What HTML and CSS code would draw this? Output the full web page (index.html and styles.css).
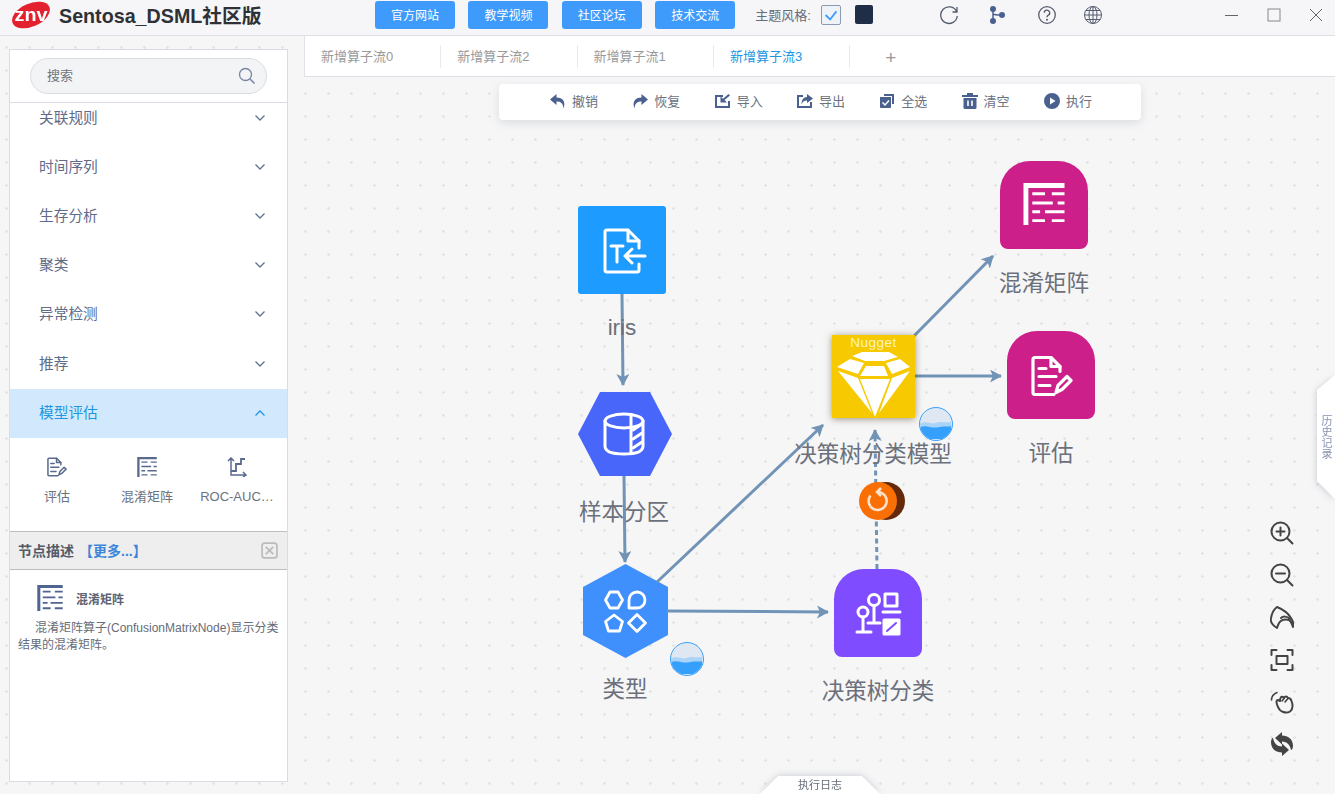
FILE: index.html
```html
<!DOCTYPE html>
<html lang="zh">
<head>
<meta charset="utf-8">
<title>Sentosa_DSML社区版</title>
<link rel="stylesheet" href="styles.css">
</head>
<body>
<svg class="defs" aria-hidden="true">
  <symbol id="i-matrix" viewBox="0 0 42 43">
    <path fill="none" stroke="currentColor" stroke-width="5" d="M0 2.500H42M2.500 0V43"/>
    <path fill="none" stroke="currentColor" stroke-width="3" d="M9 11H22M29 11H42M9 20.500H30M35 20.500H42M9 29.500H17M22 29.500H42M9 38.500H22M29 38.500H42"/>
  </symbol>
  <symbol id="i-report" viewBox="0 0 42 41">
    <g fill="none" stroke="currentColor" stroke-width="3.200" stroke-linecap="round" stroke-linejoin="round">
      <path d="M29 16V11L20 2H4Q2 2 2 4V37Q2 39 4 39H23"/>
      <path d="M20 2V11H29"/>
      <path d="M8 13H15M8 21H25M8 30H19"/>
      <path d="M25 37L27 30L36 21L40 25L31 34Z"/>
    </g>
  </symbol>
</svg>

<div class="app">
  <header class="topbar">
    <div class="brand">
      <span class="logo">
        <svg class="logo-mark" viewBox="0 0 38 28"><ellipse cx="19" cy="14" rx="20" ry="11.500" transform="rotate(-24 19 14)" fill="#e3202d"/></svg>
        <span class="logo-text">znv</span>
      </span>
      <span class="brand-name">Sentosa_DSML社区版</span>
    </div>
    <nav class="links">
      <a class="link-btn">官方网站</a>
      <a class="link-btn">教学视频</a>
      <a class="link-btn">社区论坛</a>
      <a class="link-btn">技术交流</a>
    </nav>
    <div class="theme">
      <span class="theme-label">主题风格:</span>
      <span class="swatch-light">
        <svg viewBox="0 0 20 20"><path fill="none" stroke="#3f9bfb" stroke-width="2" d="M4 10L9 15L16 6"/></svg>
      </span>
      <span class="swatch-dark"></span>
    </div>
    <div class="tools">
      <svg class="tool" viewBox="0 0 20 20"><path fill="none" stroke="#555d6e" stroke-width="1.300" d="M17.500 6.500A8.300 8.300 0 1 0 18.300 11M18 2V7H13.500"/></svg>
      <svg class="tool" viewBox="0 0 20 20"><g fill="#4a6190"><circle cx="6" cy="4" r="3"/><circle cx="6" cy="16" r="3"/><circle cx="15" cy="10" r="3"/></g><path fill="none" stroke="#4a6190" stroke-width="1.500" d="M6 4V16M6 9Q7 10 15 10"/></svg>
      <svg class="tool tool-help" viewBox="0 0 20 20"><circle cx="10" cy="10" r="8.300" fill="none" stroke="#555d6e" stroke-width="1.300"/><path fill="none" stroke="#555d6e" stroke-width="1.400" d="M7.300 7.800A2.700 2.700 0 1 1 11 10.300Q10 10.800 10 12.300"/><circle cx="10" cy="14.700" r="1" fill="#555d6e"/></svg>
      <svg class="tool" viewBox="0 0 20 20"><g fill="none" stroke="#555d6e" stroke-width="1"><circle cx="10" cy="10" r="8.500"/><ellipse cx="10" cy="10" rx="4" ry="8.500"/><path d="M10 1.500V18.500M1.500 10H18.500M2.700 5.500H17.300M2.700 14.500H17.300"/></g></svg>
    </div>
    <div class="winctl">
      <svg class="win" viewBox="0 0 16 16"><path stroke="#666" stroke-width="1" d="M1 8.500H14"/></svg>
      <svg class="win" viewBox="0 0 16 16"><rect x="2" y="2" width="12" height="12" fill="none" stroke="#888" stroke-width="1"/></svg>
      <svg class="win" viewBox="0 0 16 16"><path stroke="#666" stroke-width="1" d="M2 2L14 14M14 2L2 14"/></svg>
    </div>
  </header>

  <div class="workspace">
    <aside class="sidebar">
      <div class="search-wrap">
        <div class="search">
          <span class="search-text">搜索</span>
          <svg class="search-icon" viewBox="0 0 18 18"><circle cx="7.500" cy="7.500" r="6" fill="none" stroke="#7a86a8" stroke-width="1.300"/><path stroke="#7a86a8" stroke-width="1.600" d="M12 12L16.500 16.500"/></svg>
        </div>
      </div>
      <div class="menu-scroll">
        <ul class="menu">
          <li class="menu-item">关联规则<svg class="chev" viewBox="0 0 10 6"><path d="M.5.5L5 5L9.500.5"/></svg></li>
          <li class="menu-item">时间序列<svg class="chev" viewBox="0 0 10 6"><path d="M.5.5L5 5L9.500.5"/></svg></li>
          <li class="menu-item">生存分析<svg class="chev" viewBox="0 0 10 6"><path d="M.5.5L5 5L9.500.5"/></svg></li>
          <li class="menu-item">聚类<svg class="chev" viewBox="0 0 10 6"><path d="M.5.5L5 5L9.500.5"/></svg></li>
          <li class="menu-item">异常检测<svg class="chev" viewBox="0 0 10 6"><path d="M.5.5L5 5L9.500.5"/></svg></li>
          <li class="menu-item">推荐<svg class="chev" viewBox="0 0 10 6"><path d="M.5.5L5 5L9.500.5"/></svg></li>
          <li class="menu-item menu-item-open">模型评估<svg class="chev" viewBox="0 0 10 6"><path d="M.5 5.500L5 1L9.500 5.500"/></svg></li>
        </ul>
        <div class="palette">
          <div class="pal-item">
            <svg class="pal-icon"><use href="#i-report"/></svg>
            <span class="pal-label">评估</span>
          </div>
          <div class="pal-item">
            <svg class="pal-icon"><use href="#i-matrix"/></svg>
            <span class="pal-label">混淆矩阵</span>
          </div>
          <div class="pal-item">
            <svg class="pal-icon" viewBox="0 0 20 20"><g fill="none" stroke="currentColor" stroke-width="1.500"><path d="M4 1V18H19M1 4L4 1L7 4M16 15L19 18L16 20"/><path d="M4 14H9V7H14V2H18" stroke-width="1.800"/></g></svg>
            <span class="pal-label">ROC-AUC…</span>
          </div>
        </div>
      </div>
      <section class="desc">
        <div class="desc-head">
          <span class="desc-title">节点描述</span>
          <a class="desc-more">【更多...】</a>
          <svg class="desc-close" viewBox="0 0 16 16"><rect x="1" y="1" width="14" height="14" rx="2.500" fill="none" stroke="#bbb" stroke-width="1.600"/><path stroke="#bbb" stroke-width="1.600" d="M4.500 4.500L11.500 11.500M11.500 4.500L4.500 11.500"/></svg>
        </div>
        <div class="desc-body">
          <div class="desc-node">
            <svg class="desc-icon"><use href="#i-matrix"/></svg>
            <b class="desc-name">混淆矩阵</b>
          </div>
          <p class="desc-text">混淆矩阵算子(ConfusionMatrixNode)显示分类结果的混淆矩阵。</p>
        </div>
      </section>
    </aside>

    <main class="main">
      <div class="tabs">
        <div class="tab">新增算子流0</div>
        <div class="tab">新增算子流2</div>
        <div class="tab">新增算子流1</div>
        <div class="tab tab-active">新增算子流3</div>
        <div class="tab-add">+</div>
      </div>
      <div class="canvas">
        <div class="toolbar">
          <div class="tb-item"><svg class="tb-icon" viewBox="0 0 16 16"><path d="M6.500 1L0 6.500L6.500 12V8.500C10.500 8.500 13 10 13.500 15.500C16 9 13 4.500 6.500 4.500Z"/></svg>撤销</div>
          <div class="tb-item"><svg class="tb-icon" viewBox="0 0 16 16"><path d="M9.500 1L16 6.500L9.500 12V8.500C5.500 8.500 3 10 2.500 15.500C0 9 3 4.500 9.500 4.500Z"/></svg>恢复</div>
          <div class="tb-item"><svg class="tb-icon" viewBox="0 0 16 16"><path d="M0 2H8V4H2V13H13V8H15V15H0Z"/><path d="M15 2.500L9.500 7L12 9.500H5.500V3.500L8 5.800L13.500 1Z"/></svg>导入</div>
          <div class="tb-item"><svg class="tb-icon" viewBox="0 0 16 16"><path d="M0 2H6V4H2V13H13V9H15V15H0Z"/><path d="M10 1L16 5.500L10 10V7.500C7 7.500 5.500 9 4.500 11.500C4.500 7 6.500 4 10 4Z"/></svg>导出</div>
          <div class="tb-item"><svg class="tb-icon" viewBox="0 0 16 16"><path d="M5 1H15V11H13V3H5Z"/><path d="M1 4H12V14Q12 15 11 15H2Q1 15 1 14Z"/><path fill="none" stroke="#fff" stroke-width="1.500" d="M3.500 9.500L6 12L10 7.500"/></svg>全选</div>
          <div class="tb-item"><svg class="tb-icon" viewBox="0 0 16 16"><path d="M5 0H11V2H16V4H0V2H5Z"/><path d="M1.500 5H14.500V14.500Q14.500 16 13 16H3Q1.500 16 1.500 14.500Z"/><path stroke="#fff" stroke-width="1.600" d="M6 7.500V13M10 7.500V13"/></svg>清空</div>
          <div class="tb-item"><svg class="tb-icon" viewBox="0 0 16 16"><path fill-rule="evenodd" d="M8 0A8 8 0 1 1 8 16A8 8 0 1 1 8 0ZM6 4.500V11.500L11.500 8Z"/></svg>执行</div>
        </div>

        <svg class="edges" viewBox="304 77 1031 717">
          <defs>
            <marker id="arrow" markerUnits="userSpaceOnUse" markerWidth="14" markerHeight="14" refX="11" refY="6.500" orient="auto">
              <path fill="#7193b5" d="M0 0L12 6.500L0 13L3 6.500Z"/>
            </marker>
          </defs>
          <g fill="none" stroke="#7193b5" stroke-width="3">
            <path marker-end="url(#arrow)" d="M622 294L623 385"/>
            <path marker-end="url(#arrow)" d="M624 476L625 562"/>
            <path marker-end="url(#arrow)" d="M657 582L823 425"/>
            <path marker-end="url(#arrow)" d="M667 611L828 612"/>
            <path marker-end="url(#arrow)" stroke-dasharray="5 3.500" d="M877 569L875 430"/>
            <path marker-end="url(#arrow)" d="M914 336L993 256"/>
            <path marker-end="url(#arrow)" d="M915 376L1001 376"/>
          </g>
        </svg>

        <div class="node node-iris">
          <svg viewBox="0 0 88 88"><g class="glyph"><path d="M61 42V35L50 24H29Q27 24 27 26V64Q27 66 29 66H59Q61 66 61 64V58"/><path d="M50 24V35H61"/><path d="M33 40H45M39 40V56"/><path d="M67 50H47M54 43L47 50L54 57"/></g></svg>
        </div>
        <span class="label label-iris">iris</span>

        <div class="node node-sample">
          <svg viewBox="0 0 94 84"><polygon fill="#4866fa" points="22,0 72,0 94,42 72,84 22,84 0,42"/><g class="glyph"><ellipse cx="46" cy="29" rx="19" ry="7"/><path d="M27 29V54Q27 62 46 62Q65 62 65 54V29"/><path d="M53 23V61"/><path d="M55 38L64 32M55 47L64 41M55 56L64 50" stroke-width="3"/></g></svg>
        </div>
        <span class="label label-sample">样本分区</span>

        <div class="node node-type">
          <svg viewBox="0 0 85 94"><polygon fill="#3f8ffc" points="42.500,0 85,23 85,71 42.500,94 0,71 0,23"/><g class="glyph glyph-thin"><polygon points="27,28 35,28 39.500,36 35,44 27,44 22.500,36"/><path d="M46 44V36A8 8 0 1 1 54 44Z"/><polygon points="31,51 39.500,57.500 36.500,67 25.500,67 22.500,57.500"/><polygon points="54,50.500 62.500,59 54,67.500 45.500,59"/></g></svg>
        </div>
        <span class="label label-type">类型</span>

        <div class="node node-tree">
          <svg viewBox="0 0 88 88"><g class="glyph"><circle cx="40" cy="31" r="5.500"/><circle cx="29" cy="43" r="5"/><path d="M40 37V54M34 54H46M29 48V63M23 63H37"/><rect x="51" y="25" width="12" height="12"/><path d="M49 43H66"/><path d="M50 51H65V65H50Z" fill="#fff"/><path d="M53 62L62 54" stroke="#7f4cff" stroke-width="2"/></g></svg>
        </div>
        <span class="label label-tree">决策树分类</span>

        <div class="node node-nugget">
          <span class="nugget-text">Nugget</span>
          <svg viewBox="0 0 83 83"><g fill="#fff"><polygon points="20,21 30,17 57,17 66,22 52,26 33,26"/><polygon points="5,32 18,24 32,28 26,39"/><polygon points="34,31 52,31 56,41 28,41"/><polygon points="54,28 68,24 78,32 60,39"/><polygon points="6,36 26,43 40,78"/><polygon points="28,44 58,44 43,82"/><polygon points="78,36 60,43 47,78"/></g></svg>
        </div>
        <span class="label label-nugget">决策树分类模型</span>

        <div class="node node-cm">
          <svg class="node-glyph"><use href="#i-matrix"/></svg>
        </div>
        <span class="label label-cm">混淆矩阵</span>

        <div class="node node-eval">
          <svg class="node-glyph"><use href="#i-report"/></svg>
        </div>
        <span class="label label-eval">评估</span>

        <div class="ball ball-nugget"><svg viewBox="0 0 34 34"><path fill="#a9d3f7" d="M0 17C7 13 12 19 19 16C24 14 28 17 34 15V24H0Z"/><path fill="#35a0fb" d="M0 21C7 18 13 23 20 21C25 19.500 29 21 34 20V34H0Z"/></svg></div>
        <div class="ball ball-type"><svg viewBox="0 0 34 34"><path fill="#a9d3f7" d="M0 17C7 13 12 19 19 16C24 14 28 17 34 15V24H0Z"/><path fill="#35a0fb" d="M0 21C7 18 13 23 20 21C25 19.500 29 21 34 20V34H0Z"/></svg></div>
        <svg class="spinner" viewBox="0 0 46 38"><circle cx="27" cy="19" r="19" fill="#63290a"/><circle cx="19" cy="19" r="19" fill="#f96f04"/><g fill="none" stroke="#fde3cc" stroke-width="2.500"><path d="M11.500 13.500A9 9 0 1 0 19 10"/><path d="M22 6L18 10L22 14"/></g></svg>

        <div class="zoom-tools">
          <svg class="zt" viewBox="0 0 24 24"><g class="zt-s"><circle cx="10.500" cy="10.500" r="9"/><path d="M17 17L22.500 22.500M10.500 6.500V14.500M6.500 10.500H14.500"/></g></svg>
          <svg class="zt" viewBox="0 0 24 24"><g class="zt-s"><circle cx="10.500" cy="10.500" r="9"/><path d="M17 17L22.500 22.500M6 10.500H15"/></g></svg>
          <svg class="zt" viewBox="0 0 24 24"><g class="zt-s"><path d="M7 23C2 20 0 17 1 13C2 8 4 4 7 2C12 4 18 8 21 13C23 16 24 19 23 22C22 19 21 16 19 15C15 14 11 15 9 18C8 20 7.500 21.500 7 23Z"/><path d="M11 13C13 11 17 11 20 14"/></g></svg>
          <svg class="zt" viewBox="0 0 24 24"><g class="zt-s"><path d="M1.500 7V2H6.500M17.500 2H22.500V7M22.500 17V22H17.500M6.500 22H1.500V17"/><rect x="6.500" y="8" width="11" height="8"/></g></svg>
          <svg class="zt" viewBox="0 0 24 24"><g class="zt-s"><path d="M8 17C6 13 6 10 8 10L10 11C10 8 11 6 13 7L14 8C15 6 17 6 18 8C20 8 21 9 21.500 11C23 15 23 19 20 21.500C16 24 10 22 8 17Z"/><path d="M12 11L14 8.500M15 12L17.500 9M1.500 10C1.500 7 3.500 4 7 2.500" stroke-width="1.600"/></g></svg>
          <svg class="zt" viewBox="0 0 24 24"><g fill="#444"><path d="M5 6L12 0V3.500C18 3.500 23 7 23 14C23 16 22 18 21 18C20 13 17 9.500 12 9.500V12.500Z"/><path transform="rotate(180 12 12)" d="M5 6L12 0V3.500C18 3.500 23 7 23 14C23 16 22 18 21 18C20 13 17 9.500 12 9.500V12.500Z"/></g></svg>
        </div>

        <div class="history-wrap"><div class="history">历史记录</div></div>
        <div class="log-wrap"><div class="log">执行日志</div></div>
      </div>
    </main>
  </div>
</div>
</body>
</html>
```

FILE: styles.css
```css
* { box-sizing: border-box; }
html, body { margin: 0; padding: 0; height: 100%; }
body {
  width: 1335px;
  height: 794px;
  overflow: hidden;
  font-family: "Liberation Sans", "Noto Sans CJK SC", sans-serif;
  color: #5a6785;
  background: #f6f6f7;
}
.defs { position: absolute; width: 0; height: 0; }
.app { display: flex; flex-direction: column; height: 794px; }

/* Top bar */
.topbar {
  display: flex;
  align-items: center;
  height: 36px;
  flex: none;
  padding: 0 0 6px 12px;
  background: #f6f6f8;
  border-bottom: 1px solid #dcdfe6;
}
.brand { display: flex; align-items: center; width: 363px; }
.logo { position: relative; display: block; width: 38px; height: 28px; }
.logo-mark { display: block; width: 38px; height: 28px; overflow: visible; }
.logo-text {
  position: absolute;
  left: 0;
  right: 0;
  top: 4px;
  font-size: 18px;
  line-height: 20px;
  font-weight: 700;
  text-align: center;
  color: #fff;
  transform: scaleX(1.1);
}
.brand-name {
  margin-left: 9px;
  font-size: 19.700px;
  font-weight: 700;
  color: #2e3136;
  white-space: nowrap;
}
.links { display: flex; gap: 13.400px; }
.link-btn {
  display: flex;
  align-items: center;
  justify-content: center;
  width: 80px;
  height: 28px;
  padding-bottom: 1px;
  border-radius: 3px;
  background: #3f9bfb;
  color: #fff;
  font-size: 12px;
}
.theme { display: flex; align-items: center; margin-left: 20px; }
.theme-label { width: 66px; font-size: 13px; color: #666c78; white-space: nowrap; }
.swatch-light {
  width: 20px;
  height: 20px;
  margin-right: 14px;
  border: 1px solid #8d9ab0;
  border-radius: 2px;
  background: #eef3fa;
}
.swatch-light svg { display: block; width: 18px; height: 18px; }
.swatch-dark { width: 18px; height: 19px; border-radius: 2px; background: #1f2d47; }
.tools { display: flex; gap: 28px; margin-left: 66px; }
.tool { display: block; width: 20px; height: 20px; }
.tool-help { margin: 0 -2px 0 2px; }
.winctl { display: flex; gap: 26px; margin-left: auto; padding-right: 11px; }
.win { display: block; width: 16px; height: 16px; }

/* Workspace */
.workspace {
  display: flex;
  flex: 1;
  min-height: 0;
  background-color: #f6f6f7;
  background-image: radial-gradient(circle at 1.5px 1.5px, #e2e3e7 1px, transparent 1.5px);
  background-size: 23px 23px;
  background-position: 5px 10px;
}

/* Sidebar */
.sidebar {
  display: flex;
  flex-direction: column;
  flex: none;
  width: 279px;
  height: 733px;
  margin: 13px 16px 0 9px;
  background: #fff;
  border: 1px solid #d9dce3;
}
.search-wrap { flex: none; height: 53px; padding: 8px 20px 0; border-bottom: 1px solid #d9dce3; }
.search {
  display: flex;
  align-items: center;
  justify-content: space-between;
  height: 36px;
  padding: 0 10px 0 16px;
  border: 1px solid #d9dce3;
  border-radius: 18px;
  background: #f3f4f6;
}
.search-text { padding-bottom: 3px; font-size: 13px; color: #717680; }
.search-icon { display: block; width: 18px; height: 18px; }
.menu-scroll { flex: none; height: 428px; overflow: hidden; }
.menu { list-style: none; margin: -9px 0 0; padding: 0; }
.menu-item {
  display: flex;
  align-items: center;
  justify-content: space-between;
  height: 49.200px;
  padding: 0 22px 5px 29px;
  font-size: 14.700px;
  color: #5f6b88;
}
.menu-item-open { background: #d2e9fd; color: #2196e0; }
.chev { display: block; width: 10px; height: 6px; margin-top: 3px; fill: none; stroke: #5f7290; stroke-width: 1.300; }
.menu-item-open .chev { stroke: #2196e0; }
.palette { display: grid; grid-template-columns: repeat(3, 90px); padding: 19px 0 0 2px; }
.pal-item { display: flex; flex-direction: column; align-items: center; gap: 11px; min-width: 0; color: #5a6a8e; }
.pal-icon { display: block; width: 20px; height: 20px; }
.pal-label {
  white-space: nowrap;
  font-size: 13px;
  line-height: 18px;
  color: #6b7280;
}
.desc { flex: 1; display: flex; flex-direction: column; }
.desc-head {
  display: flex;
  align-items: center;
  flex: none;
  height: 39px;
  padding: 0 9px 1px 8px;
  background: #eeeeee;
  border-top: 1px solid #bcbec2;
  border-bottom: 1px solid #bcbec2;
  font-size: 14px;
  font-weight: 700;
}
.desc-title { color: #555b66; }
.desc-more { margin-left: 5px; color: #3b86d8; }
.desc-close { display: block; width: 17px; height: 17px; margin-left: auto; }
.desc-body { padding: 15px 8px 0; }
.desc-node { display: flex; align-items: center; gap: 13px; padding-left: 19px; color: #4f6490; }
.desc-icon { display: block; width: 26px; height: 26px; }
.desc-name { font-size: 12px; color: #5a6272; }
.desc-text { margin: 9px 0 0; font-size: 12px; line-height: 17px; text-indent: 17px; color: #666c78; }

/* Main */
.main { display: flex; flex-direction: column; flex: 1; min-width: 0; }
.tabs {
  display: flex;
  align-items: center;
  flex: none;
  height: 41px;
  background: #fff;
  border-left: 1px solid #e0e3e9;
  border-bottom: 1px solid #dcdfe6;
}
.tab {
  display: flex;
  align-items: center;
  width: 136.300px;
  height: 23px;
  padding: 0 0 1px 16px;
  border-right: 1px solid #e8eaee;
  font-size: 13px;
  color: #999;
}
.tab-active { color: #2196e0; }
.tab-add { margin: 3px 0 0 35px; font-size: 19px; line-height: 20px; color: #999; }
.canvas { position: relative; flex: 1; min-height: 0; }
.toolbar {
  position: relative;
  z-index: 3;
  display: flex;
  gap: 34.300px;
  align-items: center;
  width: 642px;
  height: 36px;
  margin: 7px 0 0 195px;
  padding: 0 0 3px 51px;
  background: #fff;
  border-radius: 4px;
  box-shadow: 0 3px 10px rgba(60, 70, 90, .14);
}
.tb-item { display: flex; align-items: center; gap: 6px; font-size: 13px; color: #6b7280; white-space: nowrap; }
.tb-icon { display: block; width: 16px; height: 16px; fill: #4a6190; }

.edges { position: absolute; left: 0; top: 0; width: 1031px; height: 717px; z-index: 2; pointer-events: none; }
.node { position: absolute; z-index: 1; }
.node > svg { display: block; }
.glyph { fill: none; stroke: #fff; stroke-width: 3; stroke-linecap: round; stroke-linejoin: round; }
.glyph-thin { stroke-width: 2.800; }
.node-iris { left: 274px; top: 129px; width: 88px; height: 88px; background: #1e9bff; border-radius: 3px; }
.node-sample { left: 274px; top: 315px; width: 94px; height: 84px; }
.node-type { left: 279px; top: 487px; width: 85px; height: 94px; }
.node-tree { left: 530px; top: 492px; width: 88px; height: 88px; background: #7f4cff; border-radius: 30px 30px 8px 8px; }
.node-nugget { left: 528px; top: 258px; width: 83px; height: 83px; background: #f6c900; box-shadow: 0 1px 7px rgba(60, 50, 0, .5); z-index: 3; }
.node-cm { left: 696px; top: 84px; width: 88px; height: 88px; padding: 22px 0 0 23px; background: #cc1f8a; border-radius: 30px 30px 8px 8px; color: #fff; }
.node-eval { left: 703px; top: 254px; width: 88px; height: 88px; padding: 24px 0 0 24px; background: #cc1f8a; border-radius: 30px 30px 8px 8px; color: #fff; }
.node-glyph { width: 42px; height: 42px; }
.nugget-text {
  position: absolute;
  left: 0;
  right: 0;
  top: 0;
  font-family: "Liberation Sans", sans-serif;
  font-size: 13.500px;
  letter-spacing: .5px;
  line-height: 15px;
  text-align: center;
  color: #fff3c0;
}
.label {
  position: absolute;
  z-index: 3;
  width: 200px;
  font-size: 22.500px;
  line-height: 30px;
  text-align: center;
  color: #6b707b;
  white-space: nowrap;
}
.label-iris { left: 218px; top: 236px; }
.label-sample { left: 220px; top: 421px; }
.label-type { left: 221px; top: 598px; }
.label-tree { left: 474px; top: 600px; }
.label-nugget { left: 469px; top: 363px; }
.label-cm { left: 640px; top: 192px; }
.label-eval { left: 647px; top: 362px; }
.ball {
  position: absolute;
  z-index: 3;
  width: 34px;
  height: 34px;
  overflow: hidden;
  border: 1.500px solid #3aa0f8;
  border-radius: 50%;
  background: #dfe8f2;
}
.ball svg { display: block; width: 31px; height: 31px; }
.ball-nugget { left: 615px; top: 330px; }
.ball-type { left: 366px; top: 565px; }
.spinner { position: absolute; z-index: 3; left: 555px; top: 405px; width: 46px; height: 38px; }
.zoom-tools { position: absolute; z-index: 3; left: 966px; top: 444px; display: flex; flex-direction: column; gap: 18.200px; }
.zt { display: block; width: 24px; height: 24px; }
.zt-s { fill: none; stroke: #444; stroke-width: 2; stroke-linecap: round; stroke-linejoin: round; }
.history-wrap { position: absolute; z-index: 3; right: 0; top: 298px; filter: drop-shadow(-1px 1px 3px rgba(60, 70, 90, .2)); }
.history {
  display: flex;
  align-items: center;
  justify-content: center;
  width: 18px;
  height: 124px;
  clip-path: polygon(100% 0, 0 15px, 0 106px, 100% 100%);
  background: #fff;
  writing-mode: vertical-rl;
  font-size: 11px;
  color: #8a93b0;
}
.log-wrap { position: absolute; z-index: 3; left: 456px; bottom: 0; filter: drop-shadow(0 -1px 3px rgba(60, 70, 90, .2)); }
.log {
  width: 120px;
  height: 18px;
  padding-top: 2px;
  clip-path: polygon(15% 0, 85% 0, 100% 100%, 0 100%);
  background: #fff;
  font-size: 11px;
  line-height: 15px;
  text-align: center;
  color: #666c78;
}
```
